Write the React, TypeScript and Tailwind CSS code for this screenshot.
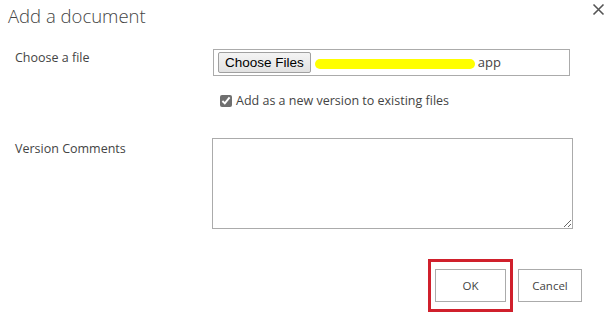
import React from "react";

const font = { fontFamily: '"Open Sans", "Noto Sans", sans-serif' };

export default function App() {
  return (
    <div className="w-[611px] h-[318px] bg-white text-[#444] overflow-hidden" style={font}>
      {/* header */}
      <div className="flex items-start justify-between pl-[8px] pr-[6px] pt-[2px] h-[49px]">
        <h1 className="text-[18.5px] font-light text-[#444] leading-[28px]">
          Add a document
        </h1>
        <button className="text-[#555] mt-[1px]">
          <svg width="13" height="13" viewBox="0 0 13 13">
            <path d="M1.5 1.5 L11.5 11.5 M11.5 1.5 L1.5 11.5" stroke="#555" strokeWidth="1.6" />
          </svg>
        </button>
      </div>

      {/* choose a file */}
      <div className="flex pl-[15px]">
        <div className="w-[198px] text-[12.5px] pt-[1px] leading-[16px] text-[#444]">Choose a file</div>
        <div className="flex flex-col">
          <div className="w-[357px] h-[27px] border border-[#ababab] flex items-center pl-[4px]">
            <button
              className="h-[21px] px-[6px] border border-[#a0a0a0] rounded-[2px] bg-gradient-to-b from-[#f4f4f4] to-[#e2e2e2] text-[13.5px] text-black leading-none"
              style={{ fontFamily: '"Liberation Sans", Arial, sans-serif' }}
            >
              Choose Files
            </button>
            <span className="ml-[4px] w-[160px] h-[10px] bg-[#ffff00] rounded-full mt-[2px]"></span>
            <span className="ml-[3px] text-[13px] text-[#444]">app</span>
          </div>
          <label className="flex items-center mt-[16px] ml-[7px] text-[12.5px] text-[#444]">
            <input type="checkbox" defaultChecked className="w-[12px] h-[12px] m-0 accent-[#6f6f6f]" />
            <span className="ml-[4px]">Add as a new version to existing files</span>
          </label>
        </div>
      </div>

      {/* version comments */}
      <div className="flex pl-[15px] mt-[27px]">
        <div className="w-[197px] text-[12.5px] pt-[2px] text-[#444]">Version Comments</div>
        <textarea className="w-[361px] h-[91px] border border-[#ababab] outline-none resize" />
      </div>

      {/* buttons */}
      <div className="flex justify-end items-center pr-[29px] mt-[30px]">
        <div className="border-[3px] border-[#d0202c] px-[4px] py-[7px]">
          <button className="w-[71px] h-[33px] border border-[#ababab] bg-white text-[11.5px] text-[#444]">
            OK
          </button>
        </div>
        <button className="ml-[5px] w-[64px] h-[33px] border border-[#ababab] bg-white text-[11.5px] text-[#444]">
          Cancel
        </button>
      </div>
    </div>
  );
}
